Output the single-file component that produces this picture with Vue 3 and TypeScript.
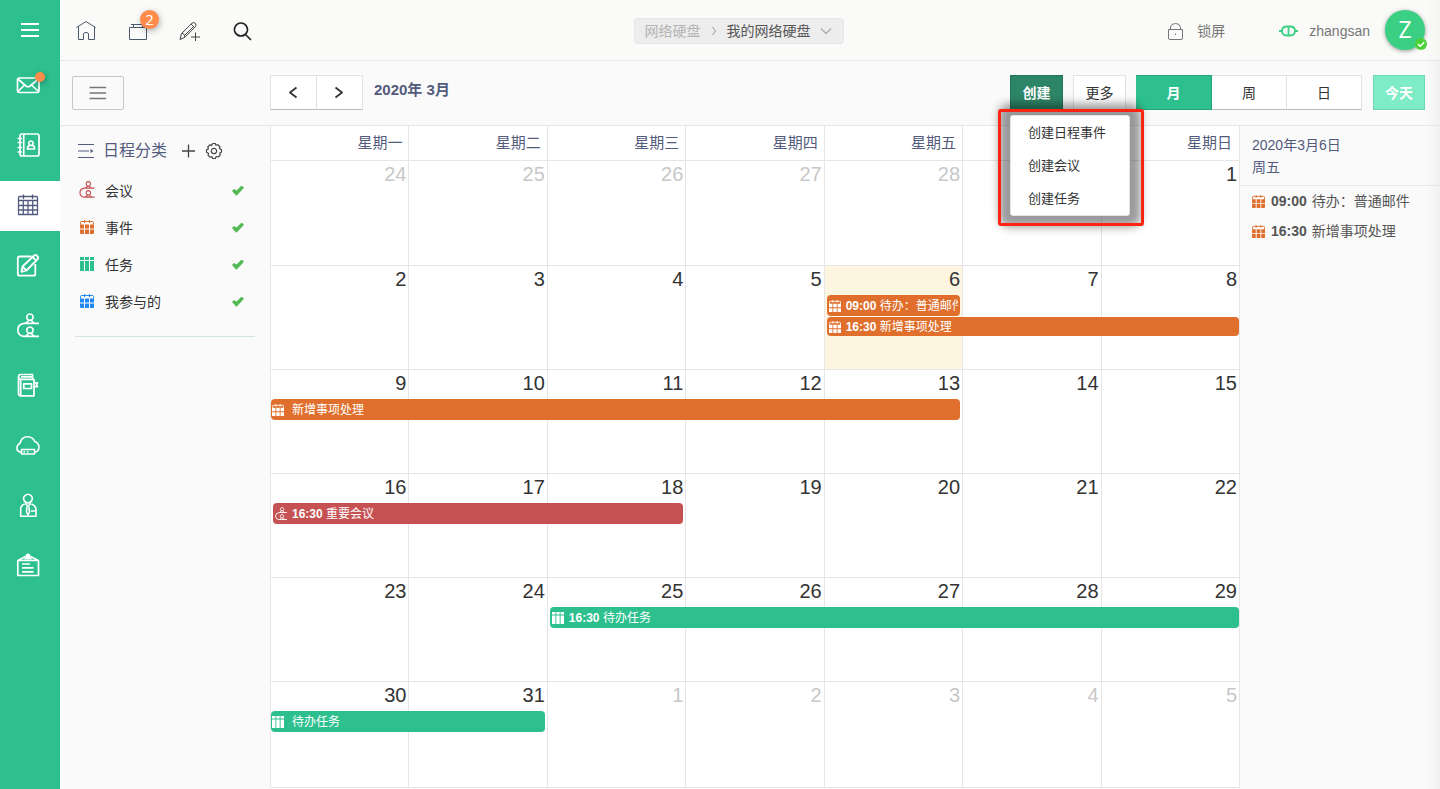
<script setup lang="ts">
import { h, ref } from 'vue'

interface Glyph { box: number; line?: string; solid?: string; weight?: number }

const glyphs: Record<string, Glyph> = {
  menu: { box: 26, weight: 1.8, line: 'M6 7H24M6 13H24M6 19H24' },
  mail: { box: 26, weight: 1.7, line: 'M4 5H22Q24 5 24 7V17Q24 19.500 22 19.500H4Q2.500 19.500 2.500 18V7Q2.500 5 4 5ZM3 6L11 13Q13 14.500 15 13L23.500 6M3 18.500L9.500 12M23.500 18.500L16.500 12' },
  contacts: { box: 26, weight: 1.7, line: 'M7 1H22Q24 1 24 3V21Q24 23 22 23H7Q5 23 5 21V3Q5 1 7 1ZM8.700 1V23M2.500 5.500H7M2.500 9.500H7M2.500 14.500H7M2.500 19H7M16 8A2.200 2.200 0 1 1 15.900 8ZM12.500 16V15Q13 12.500 15 12.300H17Q19.500 12.500 19.500 15V16Z' },
  calendar: { box: 26, weight: 1.3, line: 'M4.500 3.500H21.500Q22.500 3.500 22.500 4.500V21.500H3.500V4.500Q3.500 3.500 4.500 3.500ZM8.500 1.500V6M17.500 1.500V6M3.500 7.500H22.500M3.500 12.500H22.500M3.500 17H22.500M8.300 7.500V21.500M13 7.500V21.500M17.700 7.500V21.500' },
  compose: { box: 26, weight: 1.8, line: 'M16.500 3.500H4.500Q2.800 3.500 2.800 5V21Q2.800 22.700 4.500 22.700H18.500Q20.300 22.700 20.300 21V11M6.500 18.800L7.500 13.500L19.200 2.500Q20.500 1.500 21.500 2.300L22.900 3.800Q23.700 4.800 22.700 6L11.500 17.500ZM17.500 4L21.300 7.700M8 14L11.300 17.300' },
  meeting: { box: 26, weight: 1.7, line: 'M15 1A3.200 3.200 0 1 1 14.900 1ZM13.500 7Q13.300 8.800 10.500 10.300M16.500 7Q16.700 8.800 19.500 10.300M24 10.300H9.500Q2.800 11 2.800 17Q3 23 9 23.300H24M15 14A3.200 3.200 0 1 1 14.900 14ZM13.500 20Q13.300 22 10.500 23M16.500 20Q16.700 22 19.500 23' },
  book: { box: 26, weight: 1.7, line: 'M17.500 6.300V1.500H5.500Q3.500 1.500 3.500 4V20.500Q3.500 22.800 5.800 22.800H19V6.300H6Q3.700 6 3.700 4M5.700 6V22.500M6 3.800H17.500M8.800 10.800H16.500V15.500H8.800ZM19 9.800H22.500L21.500 11.700L22.500 13.700H19' },
  cloud: { box: 26, weight: 1.6, line: 'M6 19.300Q1.500 18.500 2 14.500Q2.300 11.500 5.200 10Q6.500 3.500 13 3.800Q18 4 19.700 8.500Q24 10 24 14.500Q23.500 18.500 20 19.300M6.500 16.500H19.500V21H6.500ZM8.500 18.800H10M12 18.800H13.500' },
  person: { box: 26, weight: 1.6, line: 'M13 1.300A4.300 4.300 0 1 1 12.900 1.300ZM9.500 11Q5.700 12.500 5.700 16V23.200H21V16Q20.500 12.500 16.500 11M10 10.500L13 13L16 10.500M12 13.500L11.500 19L13 22L14.500 19L14 13.500M16 18H20.500' },
  board: { box: 26, weight: 1.7, line: 'M2.800 7.500H23.500V22.500H2.800ZM3 7.500L10.500 3.500M23.300 7.500L15.500 3.500M7 11H15M7 14.800H18.500M7 18.800H18.500', solid: 'M13 .500A2.800 2.800 0 0 1 15.500 4.200L17.500 6.500H8.500L10.500 4.200A2.800 2.800 0 0 1 13 .500Z' },
  home: { box: 26, weight: 1, line: 'M3.500 9.500L13 3.500L22.500 9.500M5.500 8.500V21.500H10.500V16Q10.500 14.500 13 14.500Q15.500 14.500 15.500 16V21.500H21.500V8.500' },
  drive: { box: 26, weight: 1, line: 'M4.500 9.500H21.500V21.500H4.500ZM6 6.500H20M8.500 6.500V9.500M17.500 6.500V9.500' },
  draft: { box: 26, weight: 1, line: 'M3 21.500L4.500 15.500L15 5.200Q17 3.800 18.500 5.500Q19.700 7.200 18.300 8.800L8 19.200ZM5 15Q7.500 15.500 8 19M7.500 17.500L17 8M14 6L17.500 9.500M18.500 14.500V23M14 19H23' },
  search: { box: 26, weight: 1.6, line: 'M12 5A6.500 6.500 0 1 1 11.900 5ZM16.500 16.500L22 22' },
  lock: { box: 26, weight: 1, line: 'M5.500 11.500H19.500V20Q19.500 21.500 18 21.500H7Q5.500 21.500 5.500 20ZM7.500 11.500V9Q8 5.500 12.500 5.500Q17 5.500 17.500 9V11.500M12.500 15.500V17' },
  link: { box: 20, weight: 1.8, line: 'M1 10H4M17 10H20M9 5.500Q4 5.500 4 10Q4 14.500 9 14.500H12Q17 14.500 17 10Q17 5.500 12 5.500ZM10.500 5.500V14.500' },
  category: { box: 18, weight: 1.2, line: 'M1 2.500H17M1 9H12M1 15.500H17', solid: 'M13.500 7L16.500 9L13.500 11Z' },
  plus: { box: 18, weight: 1.3, line: 'M9.500 2.500V15.500M3 9H16' },
  gear: { box: 18, weight: 1.2, line: 'M7.700 1.500H10.300L11 3.300L12.800 2.700L15 4.700L14.500 6.500L16.500 7.700V10.300L14.700 11L15.200 13L13.200 15L11.200 14.500L10.300 16.500H7.700L7 14.600L5 15.200L3 13.200L3.500 11.300L1.500 10.300V7.700L3.400 7L2.800 5L4.800 2.900L6.700 3.400ZM9 6.300A2.700 2.700 0 1 1 8.900 6.300Z' },
  event: { box: 14, weight: 1, line: 'M.500 4.500V2.500Q.500 1.500 1.500 1.500H12.500Q13.500 1.500 13.500 2.500V4.500M4.500 0V3M9.500 0V3', solid: 'M0 4.500H4V8.500H0ZM5 4.500H9V8.500H5ZM10 4.500H14V8.500H10ZM0 9.500H4V14H1Q0 14 0 13ZM5 9.500H9V14H5ZM10 9.500H14V13Q14 14 13 14H10Z' },
  task: { box: 14, solid: 'M0 0H4V3H0ZM5 0H9V3H5ZM10 0H14V3H10ZM0 4H4V14H0ZM5 4H9V14H5ZM10 4H14V14H10Z' },
  prev: { box: 18, weight: 1.8, line: 'M12.500 4.500L6 9.500L12.500 14.500' },
  next: { box: 18, weight: 1.8, line: 'M5.500 4.500L12 9.500L5.500 14.500' },
  crumb: { box: 14, weight: 1.2, line: 'M5.500 3L8.500 7L5.500 11' },
  down: { box: 14, weight: 1.2, line: 'M2 4.500L7 9.500L12 4.500' },
  tick: { box: 12, weight: 1.5, line: 'M3 6L5.200 8.300L9.300 4.300' }
}

const Icon = (props: { name: string; size?: number }) => {
  const g = glyphs[props.name]
  const size = props.size ?? g.box
  return h('svg', { class: 'icon', width: size, height: size, viewBox: `0 0 ${g.box} ${g.box}`, 'aria-hidden': 'true' }, [
    g.line ? h('path', { d: g.line, fill: 'none', stroke: 'currentColor', 'stroke-width': g.weight, 'stroke-linejoin': 'round' }) : null,
    g.solid ? h('path', { d: g.solid, fill: 'currentColor' }) : null
  ])
}
Icon.props = ['name', 'size']

const modules = [
  { icon: 'mail', label: '邮件' }, { icon: 'contacts', label: '通讯录' }, { icon: 'calendar', label: '日程' },
  { icon: 'compose', label: '写作' }, { icon: 'meeting', label: '会议' }, { icon: 'book', label: '笔记' },
  { icon: 'cloud', label: '网盘' }, { icon: 'person', label: '人员' }, { icon: 'board', label: '公告' }
]
const activeModule = ref('calendar')

const shortcuts = [
  { icon: 'home', label: '首页' }, { icon: 'drive', label: '窗口', badge: 2 },
  { icon: 'draft', label: '新建' }, { icon: 'search', label: '搜索' }
]

const categories = ref([
  { name: '会议', icon: 'meeting', tone: 'red', on: true },
  { name: '事件', icon: 'event', tone: 'orange', on: true },
  { name: '任务', icon: 'task', tone: 'green', on: true },
  { name: '我参与的', icon: 'event', tone: 'blue', on: true }
])

const views = ['月', '周', '日']
const view = ref('月')
const menuOpen = ref(true)
const createOptions = ['创建日程事件', '创建会议', '创建任务']
const weekdays = ['星期一', '星期二', '星期三', '星期四', '星期五', '星期六', '星期日']

interface CalEvent { title: string; time?: string; icon: string; tone: string; span: number; toEdge?: boolean; slim?: boolean }
const events: Record<string, CalEvent[]> = {
  '3-6': [
    { time: '09:00', title: '待办：普通邮件', icon: 'event', tone: 'orange', span: 1 },
    { time: '16:30', title: '新增事项处理', icon: 'event', tone: 'orange', span: 3, toEdge: true, slim: true }
  ],
  '3-9': [{ title: '新增事项处理', icon: 'event', tone: 'orange', span: 5 }],
  '3-16': [{ time: '16:30', title: '重要会议', icon: 'meeting', tone: 'red', span: 3 }],
  '3-25': [{ time: '16:30', title: '待办任务', icon: 'task', tone: 'green', span: 5, toEdge: true }],
  '3-30': [{ title: '待办任务', icon: 'task', tone: 'green', span: 2 }]
}

const weeks = Array.from({ length: 6 }, (_, w) =>
  Array.from({ length: 7 }, (_, d) => {
    const date = new Date(2020, 1, 24 + w * 7 + d)
    const month = date.getMonth() + 1
    return { day: date.getDate(), other: month !== 3, today: month === 3 && date.getDate() === 6, events: events[`${month}-${date.getDate()}`] ?? [] }
  })
)

const agenda = [
  { time: '09:00', title: '待办：普通邮件' },
  { time: '16:30', title: '新增事项处理' }
]
</script>

<template>
  <div class="shell">
    <nav class="rail" aria-label="模块">
      <button class="rail-menu" type="button" aria-label="菜单"><Icon name="menu" /></button>
      <button v-for="m in modules" :key="m.icon" type="button" class="rail-item" :class="{ active: activeModule === m.icon }" :aria-label="m.label" @click="activeModule = m.icon">
        <span class="rail-glyph"><Icon :name="m.icon" /><span v-if="m.icon === 'mail'" class="dot"></span></span>
      </button>
    </nav>

    <div class="main">
      <header class="topbar">
        <nav class="shortcuts" aria-label="快捷方式">
          <button v-for="s in shortcuts" :key="s.icon" type="button" :aria-label="s.label" :class="s.icon">
            <Icon :name="s.icon" /><span v-if="s.badge" class="badge">{{ s.badge }}</span>
          </button>
        </nav>
        <nav class="crumbs" aria-label="位置">
          <a href="#" class="crumb-root">网络硬盘</a><Icon name="crumb" />
          <button type="button">我的网络硬盘<Icon name="down" /></button>
        </nav>
        <div class="account">
          <button type="button" class="lock"><Icon name="lock" />锁屏</button>
          <button type="button" class="user"><Icon name="link" />zhangsan
            <span class="avatar">Z<span class="status"><Icon name="tick" /></span></span>
          </button>
        </div>
      </header>

      <div class="toolbar">
        <div class="toolbar-side"><button type="button" class="fold" aria-label="折叠"><Icon name="menu" :size="24" /></button></div>
        <div class="pager">
          <button type="button" aria-label="上个月"><Icon name="prev" /></button>
          <button type="button" aria-label="下个月"><Icon name="next" /></button>
        </div>
        <h1>2020年 3月</h1>
        <div class="actions">
          <div class="create">
            <button type="button" class="btn primary" :aria-expanded="menuOpen" @click="menuOpen = !menuOpen">创建</button>
            <div v-if="menuOpen" class="menu" role="menu">
              <button v-for="o in createOptions" :key="o" type="button" role="menuitem">{{ o }}</button>
            </div>
            <div v-if="menuOpen" class="frame"></div>
          </div>
          <button type="button" class="btn">更多</button>
          <div class="segments">
            <button v-for="v in views" :key="v" type="button" :class="{ on: view === v }" @click="view = v">{{ v }}</button>
          </div>
          <button type="button" class="btn today-btn">今天</button>
        </div>
      </div>

      <div class="content">
        <aside class="categories">
          <div class="cat-head">
            <Icon name="category" /><h2>日程分类</h2>
            <button type="button" aria-label="添加分类"><Icon name="plus" /></button>
            <button type="button" aria-label="分类设置"><Icon name="gear" /></button>
          </div>
          <label v-for="c in categories" :key="c.name" class="cat">
            <span class="cat-icon" :class="c.tone"><Icon :name="c.icon" :size="c.icon === 'meeting' ? 18 : 14" /></span>
            <span class="cat-name">{{ c.name }}</span>
            <input v-model="c.on" type="checkbox" />
          </label>
          <hr />
        </aside>

        <table class="calendar">
          <thead><tr><th v-for="d in weekdays" :key="d" scope="col">{{ d }}</th></tr></thead>
          <tbody>
            <tr v-for="(week, w) in weeks" :key="w">
              <td v-for="(cell, i) in week" :key="i" :class="{ other: cell.other, today: cell.today }">
                <div class="num">{{ cell.day }}</div>
                <div v-for="e in cell.events" :key="e.title" class="event" :class="[e.tone, { timed: e.time, edge: e.toEdge, slim: e.slim }]" :style="{ '--span': e.span }">
                  <Icon :name="e.icon" :size="e.icon === 'meeting' ? 14 : 12" />
                  <span class="event-text"><b v-if="e.time">{{ e.time }}</b> {{ e.title }}</span>
                </div>
              </td>
            </tr>
          </tbody>
        </table>

        <aside class="agenda">
          <div class="agenda-head">2020年3月6日<br />周五</div>
          <ul>
            <li v-for="a in agenda" :key="a.time"><Icon name="event" :size="13" /><b>{{ a.time }}</b>{{ a.title }}</li>
          </ul>
        </aside>
      </div>
    </div>
  </div>
</template>

<style>
body { margin: 0; background: #fafafa; }
</style>

<style scoped>
.shell { display: flex; min-height: 100vh; overflow: hidden; font: 14px/20px "Liberation Sans", "Noto Sans CJK SC", sans-serif; color: #333; }
.shell * { box-sizing: border-box; }
button { padding: 0; border: 0; background: none; font: inherit; color: inherit; cursor: pointer; }
a { color: inherit; text-decoration: none; }
h1, h2, ul { margin: 0; padding: 0; }
.icon { display: block; flex: none; }
.red { color: #c55152; }
.orange { color: #e06f2d; }
.green { color: #2dbf8e; }
.blue { color: #2188f3; }

.rail { display: flex; flex-direction: column; gap: 10px; width: 60px; flex: none; background: #2dbf8e; color: #fff; }
.rail-menu { display: flex; align-items: center; height: 51px; padding: 9px 0 0 15px; }
.rail-item { display: flex; align-items: center; height: 50px; padding-left: 15px; }
.rail-item.active { background: #fff; color: #535b7c; }
.rail-glyph { position: relative; }
.dot { position: absolute; top: -1px; right: -4px; width: 10px; height: 10px; border-radius: 50%; background: #ff8b4a; box-shadow: 1px 2px 6px rgba(0, 0, 0, .3); }

.main { flex: 1; min-width: 0; display: flex; flex-direction: column; box-shadow: inset -16px 0 14px -12px rgba(0, 0, 0, .06); }
.topbar { display: grid; grid-template-columns: 1fr auto 1fr; align-items: center; height: 61px; padding: 2px 15px 0 0; border-bottom: 1px solid #e6e6e6; background: linear-gradient(90deg, #fafaf8 99%, #f5f5f4); }
.shortcuts { display: flex; }
.shortcuts button { position: relative; display: flex; justify-content: center; align-items: center; width: 52px; height: 58px; color: #444; }
.shortcuts .home, .shortcuts .drive { color: #4c5870; }
.shortcuts .search { color: #222; }
.badge { position: absolute; top: 8px; left: 28px; width: 19px; height: 19px; border-radius: 50%; background: #ff8b4a; box-shadow: 1px 2px 6px rgba(0, 0, 0, .3); color: #fff; font: 15px/18px "Open Sans", sans-serif; }
.crumbs { display: flex; align-items: center; height: 26px; margin-right: 8px; padding: 0 10px; border: 1px solid #e6e6e6; border-radius: 4px; background: #ededed; color: #aaa; }
.crumb-root { margin-right: 6px; color: #b4b4b4; }
.crumbs button { display: flex; align-items: center; gap: 8px; margin-left: 6px; color: #555; }
.crumbs button .icon { color: #aaa; }
.account { display: flex; justify-content: flex-end; align-items: center; color: #777; }
.lock, .user { display: flex; align-items: center; }
.lock { gap: 8px; margin-right: 53px; }
.user { gap: 11px; }
.user > .icon { color: #3bcf84; }
.avatar { position: relative; width: 40px; height: 40px; margin: 0 0 2px 4px; border-radius: 50%; background: #3bcf84; box-shadow: 0 1px 4px rgba(0, 0, 0, .4); color: #fff; font: 23px/38px "Open Sans", sans-serif; }
.status { position: absolute; right: -2px; bottom: 0; width: 12px; height: 12px; border-radius: 50%; background: #4bd037; }

.toolbar { display: flex; align-items: flex-start; height: 65px; padding: 14px 15px 0 0; border-bottom: 1px solid #e6e6e6; }
.toolbar-side { width: 210px; padding: 1px 0 0 12px; }
.fold { display: flex; justify-content: center; align-items: center; width: 52px; height: 34px; padding-right: 4px; border: 1px solid #c8c8c8; border-radius: 2px; color: #777; }
.pager { display: flex; }
.pager button { display: flex; justify-content: center; align-items: center; width: 47px; height: 35px; padding: 0 2px 2px 0; border: 1px solid #e2e2e2; border-bottom-color: #bbb; background: #fff; }
.pager button + button { border-left: 0; width: 46px; }
h1 { margin-left: 11px; font-size: 15px; line-height: 30px; color: #535b7c; }
.actions { display: flex; gap: 10px; margin-left: auto; }
.btn, .segments button { height: 35px; border: 1px solid #e2e2e2; border-bottom-color: #bbb; background: #fff; }
.btn { width: 53px; }
.primary { border-color: #237658; background: #2d8567; color: #fff; font-weight: bold; }
.today-btn { width: 52px; border-color: #6bd9b4; background: #7eecc7; color: #fff; font-weight: bold; }
.segments { display: flex; margin-right: 1px; }
.segments button { width: 75px; border-left: 0; }
.segments button:first-child { width: 76px; }
.segments button.on { border-color: #25a378; background: #2dbf8e; color: #fff; font-weight: bold; }
.create { position: relative; z-index: 5; }
.menu { position: absolute; top: 40px; left: 0; width: 120px; border: 1px solid #dfe8e6; border-radius: 3px; background: #fff; box-shadow: 0 0 10px 11px rgba(0, 0, 0, .4); }
.menu button { display: block; width: 100%; height: 33px; padding-left: 17px; font-size: 13px; text-align: left; }
.frame { position: absolute; top: 34px; left: -12px; width: 146px; height: 117px; border: 3px solid #ff2412; border-radius: 3px; pointer-events: none; }

.content { display: grid; grid-template-columns: 210px minmax(0, 1fr) 200px; flex: 1; align-items: start; }
.categories { padding: 10px 15px 0; }
.cat-head { display: flex; align-items: center; height: 30px; padding-left: 2px; color: #535b7c; }
.cat-head h2 { margin: 0 12px 0 8px; font-size: 16px; font-weight: normal; }
.cat-head button { margin-right: 8px; color: #444; }
.cat { display: flex; align-items: center; height: 37px; padding: 0 11px 0 3px; }
.cat:first-of-type { margin-top: 6px; }
.cat-icon { display: flex; justify-content: center; width: 18px; padding-bottom: 1px; }
.cat-name { flex: 1; margin-left: 9px; color: #333; }
.cat input { appearance: none; width: 12px; height: 10px; margin: 0; }
.cat input:checked { background: #54b954; clip-path: polygon(0 54%, 17% 34%, 38% 50%, 80% 0, 100% 22%, 40% 100%, 34% 100%); }
hr { height: 1px; margin: 16px 0 0; border: 0; background: #d4e5e0; }

.calendar { width: 100%; table-layout: fixed; border-spacing: 0; border-left: 1px solid #e6e6e6; background: #fff; }
th, td { padding: 0; border: 0 solid #e6e6e6; border-width: 0 1px 1px 0; }
th { height: 35px; padding-right: 6px; text-align: right; font-size: 15px; font-weight: normal; color: #535b7c; }
th:last-child { padding-right: 7px; }
td { height: 104px; vertical-align: top; }
tr:first-child td { height: 105px; }
tr:last-child td { height: 106px; }
.num { margin-bottom: 3px; padding-right: 2px; text-align: right; font-size: 20px; line-height: 26px; }
.other .num { color: #c8c8c8; }
.today { background: #fdf5e0; }
.event { position: relative; z-index: 1; display: flex; align-items: center; gap: 8px; width: calc(100% * var(--span) + 1px * var(--span) - 3px); height: 21px; margin-bottom: 1px; padding: 0 2px 0 1px; border-radius: 4px; font-size: 12px; color: #fff; }
.event.timed { width: calc(100% * var(--span) + 1px * var(--span) - 5px); gap: 5px; margin-left: 2px; padding-left: 2px; }
.event.edge { width: calc(100% * var(--span) + 1px * var(--span) - 3px); }
.event.slim { height: 19px; }
.event.orange { background: #e06f2d; }
.event.red { gap: 4px; padding-left: 1px; background: #c55152; }
.event.green { background: #2dbf8e; }
.event-text { flex: 1; min-width: 0; overflow: hidden; white-space: nowrap; }

.agenda-head { padding: 8px 12px 7px; border-bottom: 1px solid #e6e6e6; line-height: 22px; color: #535b7c; }
.agenda ul { list-style: none; }
.agenda li { display: flex; align-items: center; height: 30px; padding-left: 12px; white-space: nowrap; color: #555; }
.agenda li .icon { margin-right: 6px; color: #e06f2d; }
.agenda li b { margin-right: 5px; }
</style>
